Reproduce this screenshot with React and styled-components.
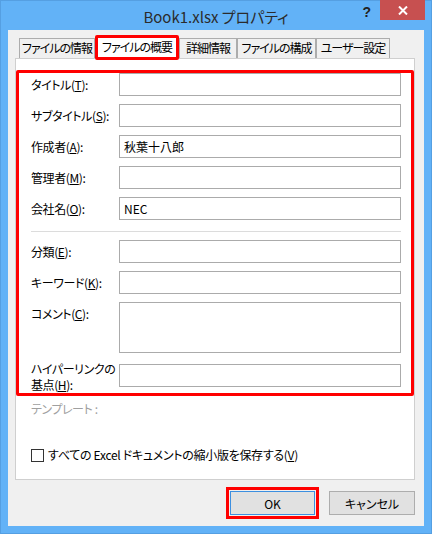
import React from 'react'
import styled, { createGlobalStyle } from 'styled-components'

const GlobalStyle = createGlobalStyle`
  html, body {
    margin: 0;
    padding: 0;
    background: #62b2f7;
  }
  body {
    font-family: "Noto Sans CJK JP", "Liberation Sans", sans-serif;
    font-feature-settings: "palt";
  }
`

const Window = styled.div`
  width: 432px;
  height: 534px;
  box-sizing: border-box;
  background: #62b2f7;
  border: 1px solid #559fe2;
  display: flex;
  flex-direction: column;
`

const TitleBar = styled.header`
  height: 29px;
  display: grid;
  grid-template-columns: 1fr auto 1fr;
`

const Title = styled.h1`
  margin: 0;
  padding-top: 5px;
  font-size: 15px;
  font-weight: 400;
  color: #2b2b2b;
  white-space: nowrap;
`

const Controls = styled.div`
  display: flex;
  justify-content: flex-end;
  align-items: flex-start;
`

const Help = styled.span`
  font-family: "Liberation Sans", sans-serif;
  font-weight: 700;
  font-size: 14px;
  color: #222;
  margin: 3px 9px 0 0;
`

const CloseButton = styled.div`
  width: 45px;
  height: 20px;
  margin-top: -1px;
  margin-right: 6px;
  background: #c75050;
  display: flex;
  align-items: center;
  justify-content: center;
`

const Client = styled.div`
  flex: 1;
  margin: 0 7px 7px;
  background: #f0f0f0;
  padding: 7px 9px 0 7px;
  display: flex;
  flex-direction: column;
`

const TabStrip = styled.div`
  display: flex;
  align-items: flex-end;
  padding-left: 4px;
  height: 23px;
  position: relative;
  z-index: 1;
  margin-bottom: -2px;
`

const Tab = styled.div`
  box-sizing: border-box;
  width: ${(p) => p.$w}px;
  height: ${(p) => (p.$active ? 25 : 20)}px;
  margin-bottom: ${(p) => (p.$active ? 0 : 2)}px;
  border: ${(p) => (p.$active ? '3px solid #ff0000' : '1px solid #acacac')};
  border-bottom: ${(p) => (p.$active ? '3px solid #ff0000' : 'none')};
  border-radius: ${(p) => (p.$active ? '2px' : '0')};
  background: ${(p) => (p.$active ? '#ffffff' : '#f0f0f0')};
  font-size: 12px;
  letter-spacing: -1px;
  line-height: ${(p) => (p.$active ? 17 : 18)}px;
  color: #000;
  text-align: center;
  white-space: nowrap;
  overflow: hidden;
`

const Panel = styled.section`
  width: 400px;
  box-sizing: border-box;
  background: #fff;
  border: 1px solid #cfcfcf;
  padding: 11px 0 16px;
`

const Highlight = styled.div`
  border: 3px solid #ff0000;
  border-radius: 2px;
  padding: 0 10px 0 12px;
`

const Form = styled.div`
  display: grid;
  grid-template-columns: 88px 1fr;
  row-gap: 8px;
`

const Label = styled.label`
  font-size: 12px;
  line-height: 16px;
  letter-spacing: -0.4px;
  color: #000;
  align-self: ${(p) => (p.$top || p.$two ? 'start' : 'center')};
  padding-top: ${(p) => (p.$top ? 4 : 0)}px;
  white-space: nowrap;
`

const Key = styled.span`
  text-decoration: underline;
  text-underline-offset: 1px;
`

const Field = styled.div`
  box-sizing: border-box;
  align-self: start;
  height: ${(p) => p.$h || 23}px;
  margin-top: ${(p) => p.$mt || 0}px;
  border: 1px solid #ababab;
  background: #fff;
  font-size: 12px;
  line-height: 21px;
  padding-left: 4px;
  color: #000;
`

const Divider = styled.hr`
  grid-column: 1 / -1;
  margin: 3px 0 0;
  border: none;
  border-top: 1px solid #dcdcdc;
  height: 0;
`

const Template = styled.div`
  margin-top: 5px;
  padding-left: 15px;
  font-size: 12px;
  line-height: 16px;
  letter-spacing: -0.4px;
  color: #a0a0a0;
`

const CheckRow = styled.label`
  display: flex;
  align-items: center;
  gap: 4px;
  margin-top: 30px;
  padding-left: 15px;
  font-size: 12px;
  line-height: 16px;
  letter-spacing: -0.3px;
  color: #000;
`

const Box = styled.span`
  width: 13px;
  height: 13px;
  box-sizing: border-box;
  border: 1px solid #333;
  background: #fff;
`

const Buttons = styled.div`
  display: flex;
  justify-content: flex-end;
  gap: 14px;
  margin-top: 11px;
`

const Button = styled.button`
  box-sizing: border-box;
  width: ${(p) => p.$w}px;
  height: 24px;
  border: 1px solid ${(p) => (p.$default ? '#3c8fe0' : '#adadad')};
  background: #e1e1e1;
  font-family: inherit;
  font-feature-settings: "palt";
  font-size: 12px;
  color: #000;
  padding: 0;
  outline: ${(p) => (p.$marked ? '3px solid #ff0000' : 'none')};
  outline-offset: 1px;
  border-radius: 0;
`

const tabs = [
  { label: 'ファイルの情報', w: 76 },
  { label: 'ファイルの概要', w: 84, active: true },
  { label: '詳細情報', w: 58 },
  { label: 'ファイルの構成', w: 79 },
  { label: 'ユーザー設定', w: 74 },
]

const KeyLabel = ({ text, k }) => (
  <>
    {text}(<Key>{k}</Key>):
  </>
)

export default function App() {
  return (
    <>
      <GlobalStyle />
      <Window>
        <TitleBar>
          <div />
          <Title>Book1.xlsx プロパティ</Title>
          <Controls>
            <Help>?</Help>
            <CloseButton>
              <svg width="10" height="9" viewBox="0 0 10 9">
                <path d="M1 0.5 L9 8.5 M9 0.5 L1 8.5" stroke="#fff" strokeWidth="2" />
              </svg>
            </CloseButton>
          </Controls>
        </TitleBar>
        <Client>
          <TabStrip>
            {tabs.map((t) => (
              <Tab key={t.label} $w={t.w} $active={t.active}>{t.label}</Tab>
            ))}
          </TabStrip>
          <Panel>
            <Highlight>
              <Form>
                <Label><KeyLabel text="タイトル" k="T" /></Label>
                <Field />
                <Label><KeyLabel text="サブタイトル" k="S" /></Label>
                <Field />
                <Label><KeyLabel text="作成者" k="A" /></Label>
                <Field>秋葉十八郎</Field>
                <Label><KeyLabel text="管理者" k="M" /></Label>
                <Field />
                <Label><KeyLabel text="会社名" k="O" /></Label>
                <Field>NEC</Field>
                <Divider />
                <Label><KeyLabel text="分類" k="E" /></Label>
                <Field />
                <Label><KeyLabel text="キーワード" k="K" /></Label>
                <Field />
                <Label $top><KeyLabel text="コメント" k="C" /></Label>
                <Field $h={51} />
                <Label $two>ハイパーリンクの<br /><KeyLabel text="基点" k="H" /></Label>
                <Field $mt={3} />
              </Form>
            </Highlight>
            <Template>テンプレート :</Template>
            <CheckRow>
              <Box />
              <span>すべての Excel ドキュメントの縮小版を保存する(<Key>V</Key>)</span>
            </CheckRow>
          </Panel>
          <Buttons>
            <Button $w={85} $default $marked>OK</Button>
            <Button $w={86}>キャンセル</Button>
          </Buttons>
        </Client>
      </Window>
    </>
  )
}
